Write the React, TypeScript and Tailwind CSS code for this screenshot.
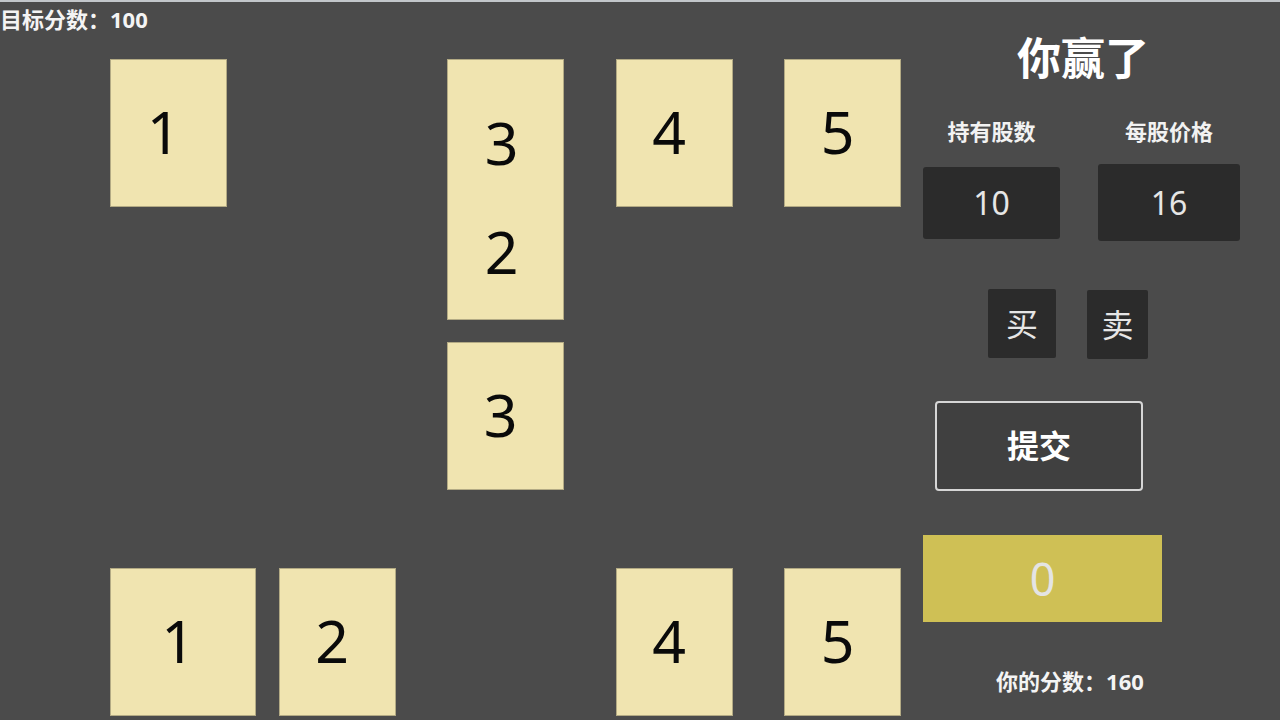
import React from "react";

const FONT = '"Noto Sans", "Noto Sans CJK SC", "Open Sans", sans-serif';

function Card({ n, w = "w-[117px]" }: { n: string; w?: string }) {
  return (
    <div
      className={`${w} h-[148px] bg-[#f0e4b0] border border-[#b3aa84] flex items-center justify-center pr-[10px] pb-[3px] text-[59px] leading-none text-[#0a0a0a]`}
    >
      {n}
    </div>
  );
}

export default function App() {
  return (
    <div
      className="w-[1280px] h-[720px] bg-[#4b4b4b] border-t-2 border-[#c2c6ca] flex overflow-hidden"
      style={{ fontFamily: FONT }}
    >
      {/* left: target + board */}
      <div className="w-[910px] flex flex-col">
        <div className="h-[34px] leading-[34px] text-[22px] font-bold text-[#f4f4f4] whitespace-nowrap">
          目标分数：100
        </div>
        <div className="mt-[23px] pl-[110px] flex gap-x-[51.5px]">
          <div className="w-[117px] h-[657px] flex flex-col justify-between">
            <Card n="1" />
            <Card n="1" w="w-[146px]" />
          </div>
          <div className="w-[117px] h-[657px] flex flex-col justify-end">
            <Card n="2" />
          </div>
          <div className="w-[117px] h-[657px] flex flex-col">
            <div className="w-[117px] h-[261px] bg-[#f0e4b0] border border-[#b3aa84] flex flex-col items-center pt-[28px] pr-[8px] text-[59px] leading-[109px] text-[#0a0a0a]">
              <span>3</span>
              <span>2</span>
            </div>
            <div className="mt-[22px]">
              <Card n="3" />
            </div>
          </div>
          <div className="w-[117px] h-[657px] flex flex-col justify-between">
            <Card n="4" />
            <Card n="4" />
          </div>
          <div className="w-[117px] h-[657px] flex flex-col justify-between">
            <Card n="5" />
            <Card n="5" />
          </div>
        </div>
      </div>

      {/* right panel */}
      <div className="flex-1 flex flex-col">
        <div className="mt-[30px] w-[346px] text-center text-[44px] leading-[53px] font-bold text-white">
          你赢了
        </div>

        <div className="mt-[32px] ml-[13px] flex items-start gap-x-[38px]">
          <div className="w-[137px] flex flex-col items-center">
            <div className="text-[22px] leading-[28px] font-bold text-[#f2f2f2] whitespace-nowrap">持有股数</div>
            <div className="mt-[22px] w-[137px] h-[72px] bg-[#2b2b2b] rounded-[3px] flex items-center justify-center text-[32px] text-[#e6e6e6]">
              10
            </div>
          </div>
          <div className="w-[142px] flex flex-col items-center">
            <div className="text-[22px] leading-[28px] font-bold text-[#f2f2f2] whitespace-nowrap">每股价格</div>
            <div className="mt-[19px] w-[142px] h-[77px] bg-[#2b2b2b] rounded-[3px] flex items-center justify-center text-[32px] text-[#e6e6e6]">
              16
            </div>
          </div>
        </div>

        <div className="mt-[48px] ml-[78px] flex items-start gap-x-[31px]">
          <div className="w-[68px] h-[69px] bg-[#2b2b2b] rounded-[2px] flex items-center justify-center text-[32px] text-[#e6e6e6]">
            买
          </div>
          <div className="mt-[1px] w-[61px] h-[69px] bg-[#2b2b2b] rounded-[2px] flex items-center justify-center text-[32px] text-[#e6e6e6]">
            卖
          </div>
        </div>

        <div className="mt-[42px] ml-[25px] w-[208px] h-[90px] bg-[#404040] border-2 border-[#d6d6d6] rounded-[4px] flex items-center justify-center text-[32px] font-bold text-white">
          提交
        </div>

        <div className="mt-[44px] ml-[13px] w-[239px] h-[87px] bg-[#cfc055] flex items-center justify-center text-[45px] text-[#e4e4e4]">
          0
        </div>

        <div className="mt-[45px] ml-[60px] w-[200px] text-center text-[22px] leading-[28px] font-bold text-[#f4f4f4] whitespace-nowrap">
          你的分数：160
        </div>
      </div>
    </div>
  );
}
